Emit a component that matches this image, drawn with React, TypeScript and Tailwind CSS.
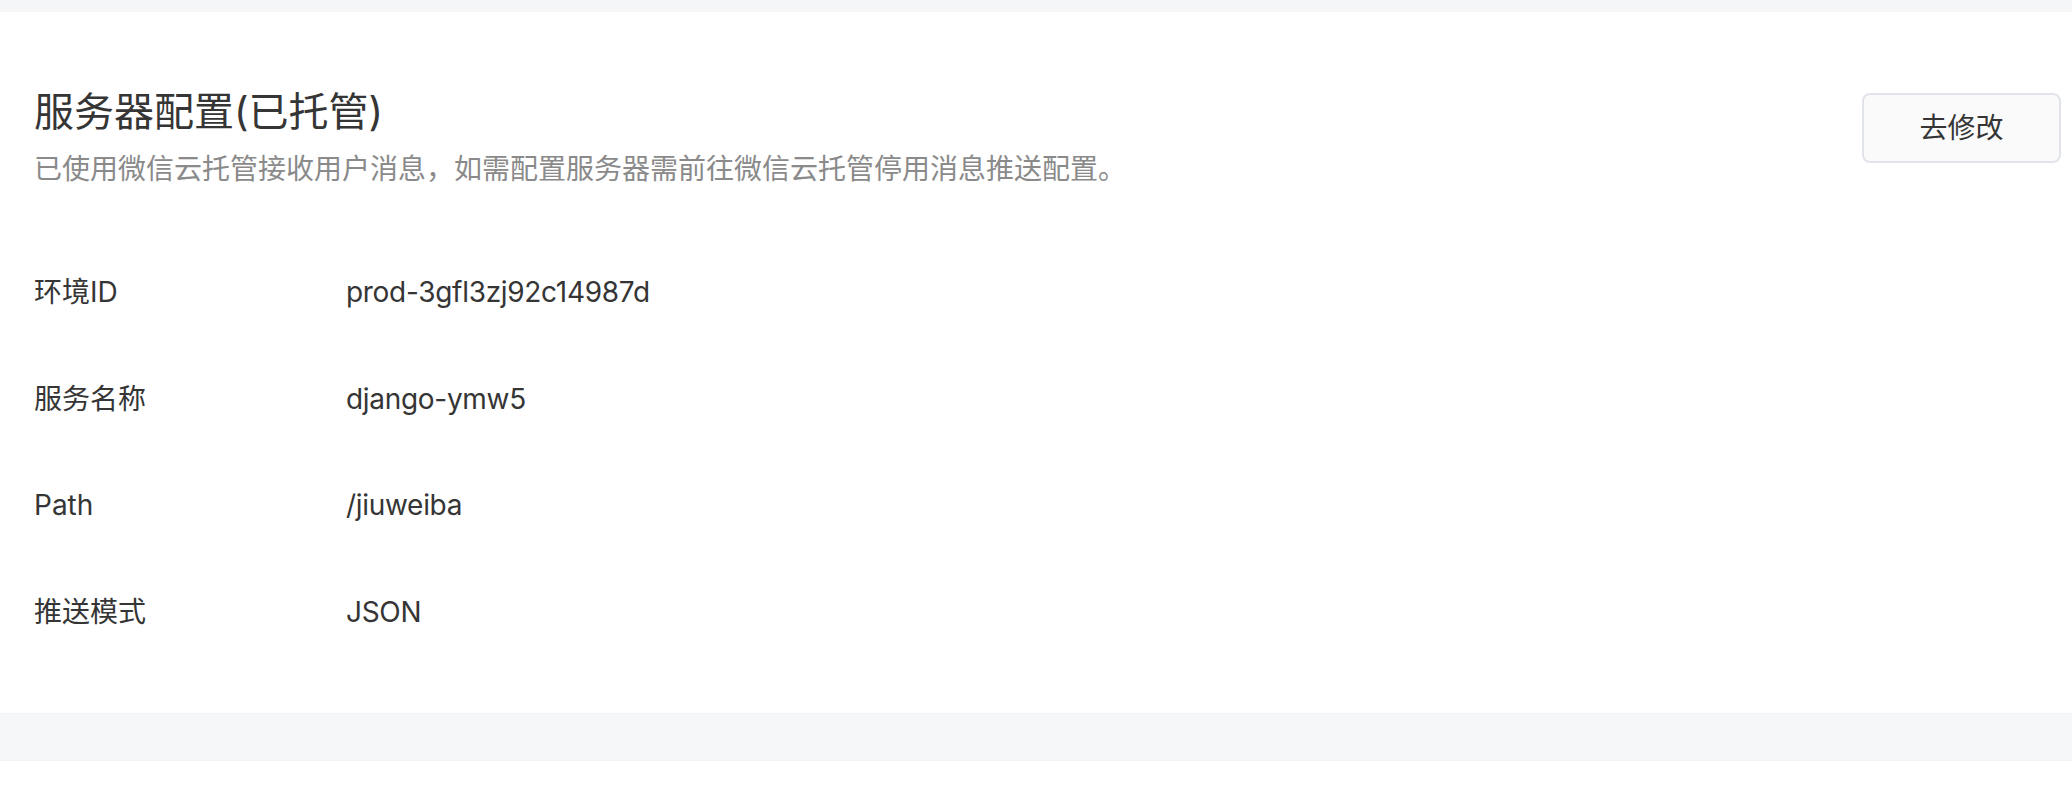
const FONT = "font-['Inter','Noto_Sans_CJK_SC',sans-serif]";

const rows = [
  { label: "环境ID", value: "prod-3gfl3zj92c14987d" },
  { label: "服务名称", value: "django-ymw5" },
  { label: "Path", value: "/jiuweiba" },
  { label: "推送模式", value: "JSON" },
];

export default function App() {
  return (
    <div className={`min-h-[808px] w-full bg-white ${FONT}`}>
      {/* top strip */}
      <div className="h-[12px] bg-[#f4f6f8]" />

      {/* server config card */}
      <section className="bg-white pl-[34px] pr-[11px] pt-[72px] pb-[81px]">
        <div className="flex items-start justify-between">
          <div>
            <h2 className="text-[40px] leading-[56px] text-[#353535] font-normal">
              服务器配置(已托管)
            </h2>
            <p className="mt-[9px] text-[28px] leading-[40px] text-[#8a8a8a]">
              已使用微信云托管接收用户消息，如需配置服务器需前往微信云托管停用消息推送配置。
            </p>
          </div>
          <button className="mt-[9px] h-[70px] w-[199px] rounded-[8px] border-2 border-[#e1e5e9] bg-[#fafafa] text-[28px] text-[#353535]">
            去修改
          </button>
        </div>

        <div className="mt-[83px] flex flex-col gap-[66.5px]">
          {rows.map((r) => (
            <div key={r.label} className="flex text-[28px] leading-[40px] text-[#353535]">
              <div className="w-[312px] shrink-0">{r.label}</div>
              <div className="tracking-[-0.3px]">{r.value}</div>
            </div>
          ))}
        </div>
      </section>

      {/* bottom strip */}
      <div className="h-[48px] bg-[#f5f7f9] border-y border-[#f1f4f5]" />
    </div>
  );
}
